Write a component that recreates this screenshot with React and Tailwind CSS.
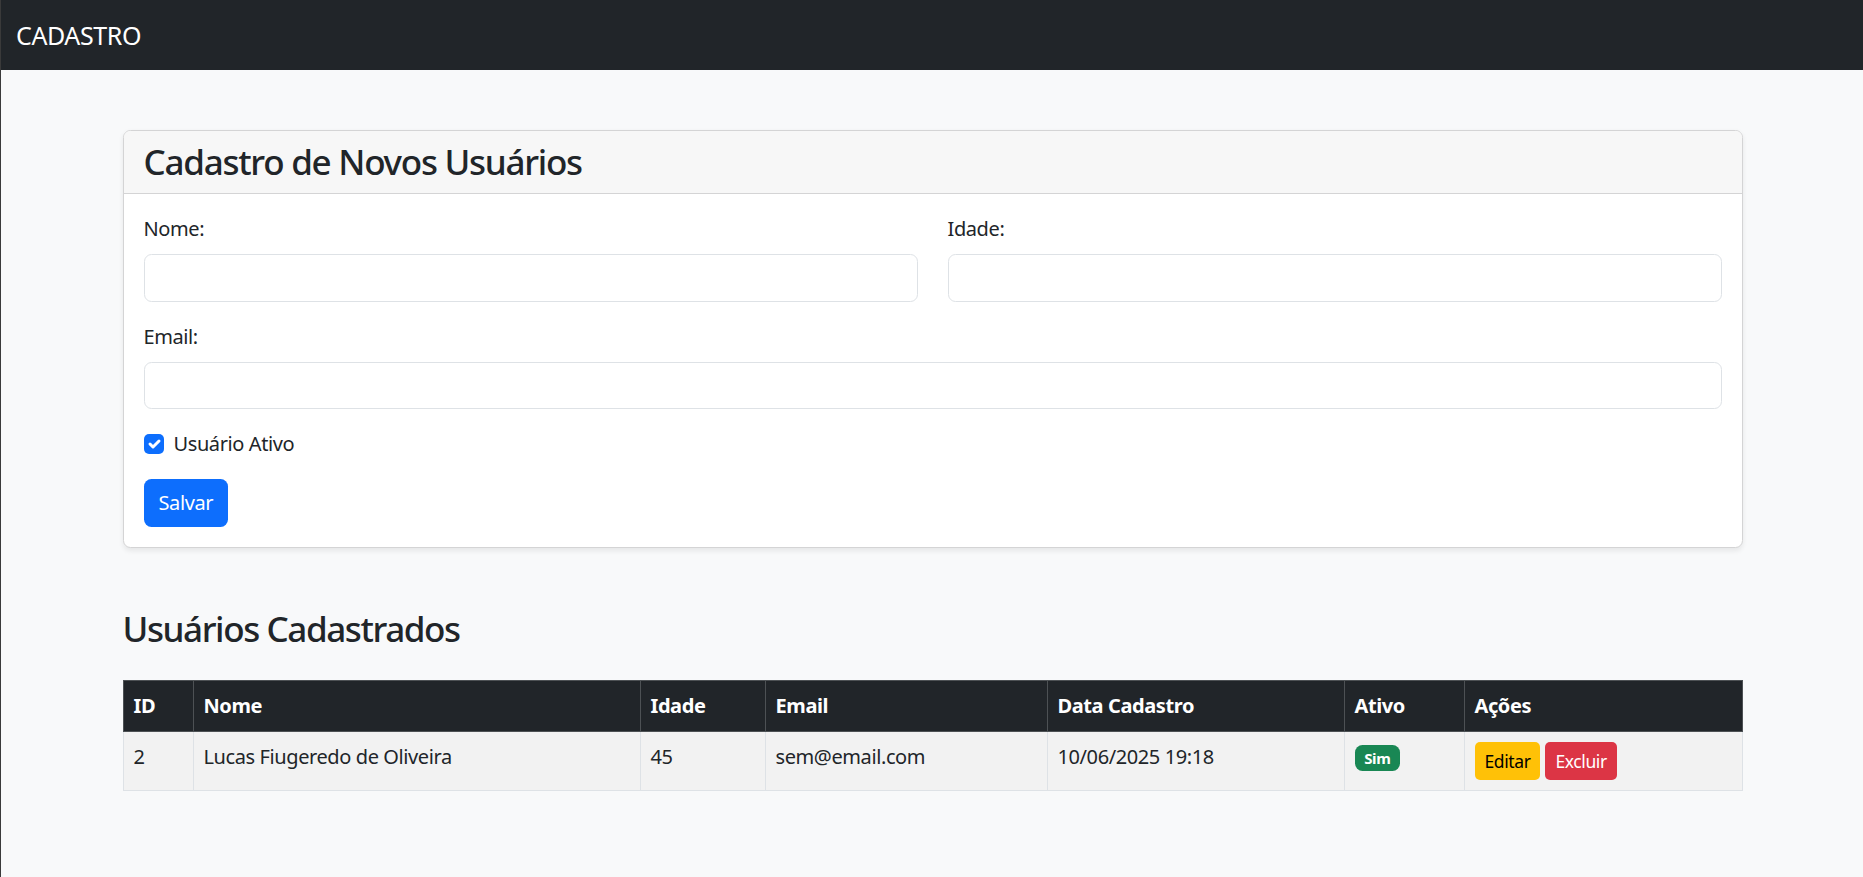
import React, { useState } from 'react';

const FONT = "font-['Noto_Sans','Open_Sans',sans-serif] tracking-[-0.025em]";

const usuarios = [
  { id: 2, nome: 'Lucas Fiugeredo de Oliveira', idade: 45, email: 'sem@email.com', data: '10/06/2025 19:18', ativo: true },
];

const App = () => {
  const [ativo, setAtivo] = useState(true);

  return (
    <div className={`${FONT} min-h-screen bg-[#f8f9fa] text-[#212529] border-l border-[#3a3a3a]`}>
      {/* Navbar */}
      <nav className="h-[70px] bg-[#212529] flex items-center px-[15px]">
        <span className="text-white text-[25px] leading-none">CADASTRO</span>
      </nav>

      <div className="pl-[1px] pb-[60px]">
        <div className="w-[1620px] mx-auto">
          {/* Form card */}
          <div className="mt-[60px] bg-white border border-[#d4d4d5] rounded-[7.5px] shadow-[0_2.5px_5px_rgba(0,0,0,0.075)] overflow-hidden">
            <div className="bg-[#f7f7f7] border-b border-[#d4d4d5] px-[20px] py-[10px]">
              <h3 className="text-[35px] font-medium leading-[42px] tracking-[-0.036em]">Cadastro de Novos Usuários</h3>
            </div>
            <div className="p-[20px]">
              <div className="grid grid-cols-2 gap-x-[30px]">
                <div className="mb-[20px]">
                  <label className="block text-[20px] leading-[30px] mb-[10px]">Nome:</label>
                  <input type="text" className="block w-full h-[47.5px] border border-[#dee2e6] rounded-[7.5px] bg-white px-[15px] outline-none" />
                </div>
                <div className="mb-[20px]">
                  <label className="block text-[20px] leading-[30px] mb-[10px]">Idade:</label>
                  <input type="number" className="block w-full h-[47.5px] border border-[#dee2e6] rounded-[7.5px] bg-white px-[15px] outline-none" />
                </div>
              </div>
              <div className="mb-[20px]">
                <label className="block text-[20px] leading-[30px] mb-[10px]">Email:</label>
                <input type="email" className="block w-full h-[47.5px] border border-[#dee2e6] rounded-[7.5px] bg-white px-[15px] outline-none" />
              </div>
              <div className="flex items-center h-[30px] mb-[20px]">
                <button
                  type="button"
                  onClick={() => setAtivo(!ativo)}
                  className={`w-[20px] h-[20px] rounded-[5px] flex items-center justify-center ${
                    ativo ? 'bg-[#0d6efd]' : 'bg-white border border-[#dee2e6]'
                  }`}
                >
                  {ativo && (
                    <svg width="20" height="20" viewBox="0 0 20 20">
                      <path d="M6 10l3 3l6-6" fill="none" stroke="#fff" strokeWidth="3" strokeLinecap="round" strokeLinejoin="round" />
                    </svg>
                  )}
                </button>
                <span className="ml-[10px] text-[20px] leading-[30px]">Usuário Ativo</span>
              </div>
              <button className="h-[47.5px] px-[15px] bg-[#0d6efd] text-white text-[20px] rounded-[7.5px]">
                Salvar
              </button>
            </div>
          </div>

          {/* List */}
          <h3 className="mt-[60px] mb-[30px] text-[35px] font-medium leading-[42px] tracking-[-0.04em]">Usuários Cadastrados</h3>
          <table className="w-full table-fixed border-collapse text-[20px] leading-[30px]">
            <thead className="bg-[#212529] text-white">
              <tr>
                <th className="w-[70px] text-left font-bold p-[10px] border border-[#4d5154]">ID</th>
                <th className="w-[447px] text-left font-bold p-[10px] border border-[#4d5154]">Nome</th>
                <th className="w-[125px] text-left font-bold p-[10px] border border-[#4d5154]">Idade</th>
                <th className="w-[282px] text-left font-bold p-[10px] border border-[#4d5154]">Email</th>
                <th className="w-[297px] text-left font-bold p-[10px] border border-[#4d5154]">Data Cadastro</th>
                <th className="w-[120px] text-left font-bold p-[10px] border border-[#4d5154]">Ativo</th>
                <th className="text-left font-bold p-[10px] border border-[#4d5154]">Ações</th>
              </tr>
            </thead>
            <tbody>
              {usuarios.map(u => (
                <tr key={u.id} className="bg-[#f2f2f2]">
                  <td className="p-[10px] align-top border border-[#dee2e6]">{u.id}</td>
                  <td className="p-[10px] align-top border border-[#dee2e6]">{u.nome}</td>
                  <td className="p-[10px] align-top border border-[#dee2e6]">{u.idade}</td>
                  <td className="p-[10px] align-top border border-[#dee2e6]">{u.email}</td>
                  <td className="p-[10px] align-top border border-[#dee2e6]">{u.data}</td>
                  <td className="p-[10px] align-top border border-[#dee2e6]">
                    <span className="inline-block bg-[#198754] text-white text-[15px] font-bold leading-none px-[9.75px] py-[5.25px] rounded-[7.5px]">
                      {u.ativo ? 'Sim' : 'Não'}
                    </span>
                  </td>
                  <td className="p-[10px] align-top border border-[#dee2e6]">
                    <div className="flex gap-[5px]">
                      <button className="h-[38.5px] px-[10px] bg-[#ffc107] text-black text-[17.5px] rounded-[5px]">Editar</button>
                      <button className="h-[38.5px] px-[10px] bg-[#dc3545] text-white text-[17.5px] rounded-[5px]">Excluir</button>
                    </div>
                  </td>
                </tr>
              ))}
            </tbody>
          </table>
        </div>
      </div>
    </div>
  );
};

export default App;
